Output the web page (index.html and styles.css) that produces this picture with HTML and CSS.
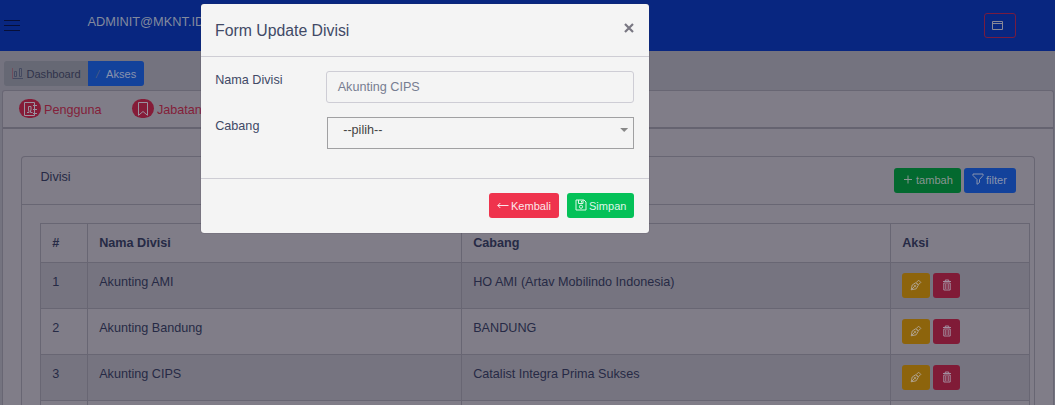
FILE: index.html
```html
<!DOCTYPE html>
<html lang="id">
<head>
<meta charset="utf-8">
<title>Divisi</title>
<link rel="stylesheet" href="styles.css">
</head>
<body>
<svg class="defs" width="0" height="0">
  <symbol id="pen" viewBox="0 0 12 12"><path d="M1.2 10.8L2.2 6L5.6 3.8L8.2 6.4L6.2 9.8ZM1.2 10.8L4.4 7.6M6.2 3.6L8.6 1.2L10.8 3.4L8.4 5.8Z"/><circle cx="5" cy="7" r=".8"/></symbol>
  <symbol id="trash" viewBox="0 0 12 12"><path d="M2 2.5H10M4.3 2.5V1H7.7V2.5M2.8 4V11H9.2V4ZM4.8 5V10M7.2 5V10"/></symbol>
</svg>
<header class="topbar">
  <svg class="menu" viewBox="0 0 16 12"><path d="M0 .5H16M0 5.5H16M0 10.5H16"/></svg>
  <span class="account">ADMINIT@MKNT.ID</span>
  <button class="window-btn"><svg viewBox="0 0 11 9"><path d="M.5 .5H10.5V8.5H.5ZM.5 2.5H10.5"/></svg></button>
</header>
<nav class="crumbs">
  <a class="crumb"><svg viewBox="0 0 12 12"><path d="M.5 1V10.5H11M2.5 3.5H4.5V8.5H2.5ZM7.5 .5H9.5V8.5H7.5Z"/><path class="warm" d="M.5 0V11"/></svg>Dashboard</a>
  <a class="crumb active"><i>/</i>Akses</a>
</nav>
<main class="panel">
  <nav class="tabs">
    <a><b><svg viewBox="0 0 16 16"><path d="M2.5 1.5H12.5V14.5H2.5ZM11 4.5H15M11 8.5H15M11 12.5H15M5 11.5H7V9.5H6.5V5.5H9V9.5H8.5V11.5H10.5"/></svg></b>Pengguna</a>
    <a><b><svg viewBox="0 0 16 16"><path d="M3.5 1.5H12.5V14.3L8 10.5L3.5 14.3Z"/></svg></b>Jabatan</a>
  </nav>
  <section class="content">
    <div class="card">
      <div class="card-head">
        <span>Divisi</span>
        <div class="actions">
          <button class="btn add"><svg viewBox="0 0 12 12"><path d="M2 6.5H10M6 2.5V10.5"/></svg>tambah</button>
          <button class="btn filter"><svg viewBox="0 0 12 12"><path d="M1 1H11V2.5L7.5 6.5V9.5L5 11.3V6.5L1 2.5Z"/></svg>filter</button>
        </div>
      </div>
      <table>
        <colgroup><col class="c1"><col class="c2"><col class="c3"><col class="c4"></colgroup>
        <tr class="head"><th>#</th><th>Nama Divisi</th><th>Cabang</th><th>Aksi</th></tr>
        <tr class="odd"><td>1</td><td>Akunting AMI</td><td>HO AMI (Artav Mobilindo Indonesia)</td><td><div class="tools"><button class="btn edit"><svg><use href="#pen"/></svg></button><button class="btn del"><svg><use href="#trash"/></svg></button></div></td></tr>
        <tr><td>2</td><td>Akunting Bandung</td><td>BANDUNG</td><td><div class="tools"><button class="btn edit"><svg><use href="#pen"/></svg></button><button class="btn del"><svg><use href="#trash"/></svg></button></div></td></tr>
        <tr class="odd"><td>3</td><td>Akunting CIPS</td><td>Catalist Integra Prima Sukses</td><td><div class="tools"><button class="btn edit"><svg><use href="#pen"/></svg></button><button class="btn del"><svg><use href="#trash"/></svg></button></div></td></tr>
        <tr class="last"><td></td><td></td><td></td><td></td></tr>
      </table>
    </div>
  </section>
</main>
<div class="modal">
  <div class="modal-head"><span>Form Update Divisi</span><svg class="close" viewBox="0 0 10 10"><path d="M1 1L9 9M9 1L1 9"/></svg></div>
  <div class="modal-body">
    <label>Nama Divisi</label><div class="input">Akunting CIPS</div>
    <label>Cabang</label><div class="select">--pilih--<i class="caret"></i></div>
  </div>
  <div class="modal-foot">
    <button class="btn back"><svg viewBox="0 0 12 12"><path d="M.8 6.5H11.5M3.3 4L.8 6.5L3.3 9"/></svg>Kembali</button>
    <button class="btn save"><svg viewBox="0 0 12 12"><path d="M1 1H9L11 3V11H1ZM3.5 1V4.5H8V1M6.5 2V3.5"/><circle cx="6" cy="7.7" r="1.6"/></svg>Simpan</button>
  </div>
</div>
</body>
</html>
```
FILE: styles.css
```css
* { box-sizing: border-box; }
body {
  margin: 0;
  height: 405px;
  overflow: hidden;
  background: #74737f;
  color: #262a45;
  font: 12.64px/19px "Liberation Sans", Arial, sans-serif;
}
svg { display: block; flex: none; fill: none; stroke: currentColor; stroke-width: 1; }
.defs { position: absolute; }
button { font-family: inherit; margin: 0; }
.topbar {
  display: flex;
  height: 51px;
  padding: 0 39px 0 4px;
  background: #082680;
}
.menu { width: 16px; height: 12px; margin-top: 20px; color: #070f38; }
.account { margin: 12px 0 0 67.5px; color: #828a9e; font-size: 12.8px; }
.window-btn {
  width: 32px;
  height: 25px;
  margin: 13px 0 0 auto;
  padding: 6px 7px;
  border: 1px solid #771c40;
  border-radius: 3px;
  background: none;
  color: #898797;
}
.window-btn svg { width: 11px; height: 9px; margin-top: -1px; }
.crumbs {
  display: flex;
  width: 140px;
  height: 25px;
  margin: 10px 0 4px 4px;
  border-radius: 3px;
  overflow: hidden;
  background: #666874;
  font-size: 11.06px;
  line-height: 26px;
}
.crumb { display: flex; width: 84px; padding-left: 8px; color: #30334b; }
.crumb svg { width: 12px; height: 12px; margin: 7px 2.5px 0 0; color: #454a61; }
.crumb .warm { stroke: #704d5c; }
.active { width: 56px; background: #13429b; color: #8993ae; }
.active i { margin-right: 7px; color: #4a5b82; }
.panel {
  width: 1052px;
  height: 315px;
  margin-left: 2px;
  border: 1px solid #686673;
  border-bottom: 0;
  border-radius: 3px 3px 0 0;
  overflow: hidden;
  background: #807d88;
}
.tabs {
  display: flex;
  height: 38px;
  padding: 8px 16px;
  gap: 30.4px;
  border-bottom: 2px solid #656370;
  color: #832039;
}
.tabs a { display: flex; gap: 3px; line-height: 23px; }
.tabs b {
  display: flex;
  align-items: center;
  justify-content: center;
  width: 22px;
  height: 19px;
  border-radius: 10px;
  background: #851c38;
  color: #9993a0;
}
.tabs b svg { width: 16px; height: 16px; }
.content { padding: 27px 18px 0; }
.card {
  width: 1014px;
  height: 249px;
  border: 1px solid #686673;
  border-bottom: 0;
  border-radius: 4px 4px 0 0;
}
.card-head {
  display: flex;
  justify-content: space-between;
  height: 48px;
  padding: 11px 18px 0 18.5px;
  border-bottom: 1px solid #686673;
}
.actions, .tools { display: flex; gap: 3px; }
.btn {
  display: flex;
  height: 25px;
  padding: 0 0 0 8px;
  border: 0;
  border-radius: 3px;
  font-size: 11.06px;
  line-height: 25px;
}
.btn svg { width: 12px; height: 12px; margin: 6px 2px 0 0; }
.actions .btn svg { margin-top: 5px; }
.tools .btn svg { margin-top: 5.5px; }
.add { width: 67px; background: #03692f; color: #899592; }
.filter { width: 52px; background: #13429b; color: #8993ae; }
table {
  width: 990px;
  margin: 18px 0 0 18px;
  table-layout: fixed;
  border-collapse: collapse;
}
.c1 { width: 47px; }
.c2 { width: 374px; }
.c3 { width: 429px; }
.c4 { width: 139px; }
th, td {
  height: 46px;
  padding: 10px 11px 0 11.2px;
  border: 1px solid #686673;
  text-align: left;
  vertical-align: top;
}
td:last-child { padding-left: 11px; }
.head th { height: 39px; }
.last td { height: 5px; padding: 0; border-bottom: 0; }
.odd { background: #767480; }
.edit { width: 28px; background: #8d640c; color: #b0a18a; }
.del { width: 27px; background: #801b37; color: #a38d9e; }
.modal {
  position: absolute;
  top: 4px;
  left: 201px;
  width: 448px;
  height: 229px;
  border-radius: 3px;
  background: #f4f4f4;
  color: #414966;
  box-shadow: 0 0 1px #343044;
}
.modal-head {
  display: flex;
  justify-content: space-between;
  height: 53px;
  padding: 15px 15px 0 14px;
  border-bottom: 1px solid #cecdd4;
  font-size: 15.8px;
  line-height: 23px;
}
.close { width: 10px; height: 10px; margin-top: 4px; stroke: #797782; stroke-width: 2.2; }
.modal-body {
  display: grid;
  grid-template-columns: 111px 308px;
  grid-template-rows: 32px 32px;
  row-gap: 14px;
  height: 122px;
  padding: 14px 15px 0 14.2px;
  border-bottom: 1px solid #cecdd4;
}
.input {
  padding: 5.5px 10.5px;
  border: 1px solid #cecdd5;
  border-radius: 3px;
  color: #777d91;
}
.select {
  display: flex;
  justify-content: space-between;
  margin-left: 1px;
  padding: 3px 5px 0 15px;
  border: 1px solid #a0a0a2;
  color: #444;
}
.caret {
  width: 8px;
  height: 4px;
  margin-top: 7px;
  background: #888;
  clip-path: polygon(0 0, 100% 0, 50% 100%);
}
.modal-foot {
  display: flex;
  justify-content: flex-end;
  gap: 8px;
  padding: 14px 15px 0;
}
.modal-foot .btn { line-height: 27px; }
.back { width: 70px; background: #ef334d; color: #fbe6ea; }
.save { width: 67px; background: #04c158; color: #def7e8; }
```
